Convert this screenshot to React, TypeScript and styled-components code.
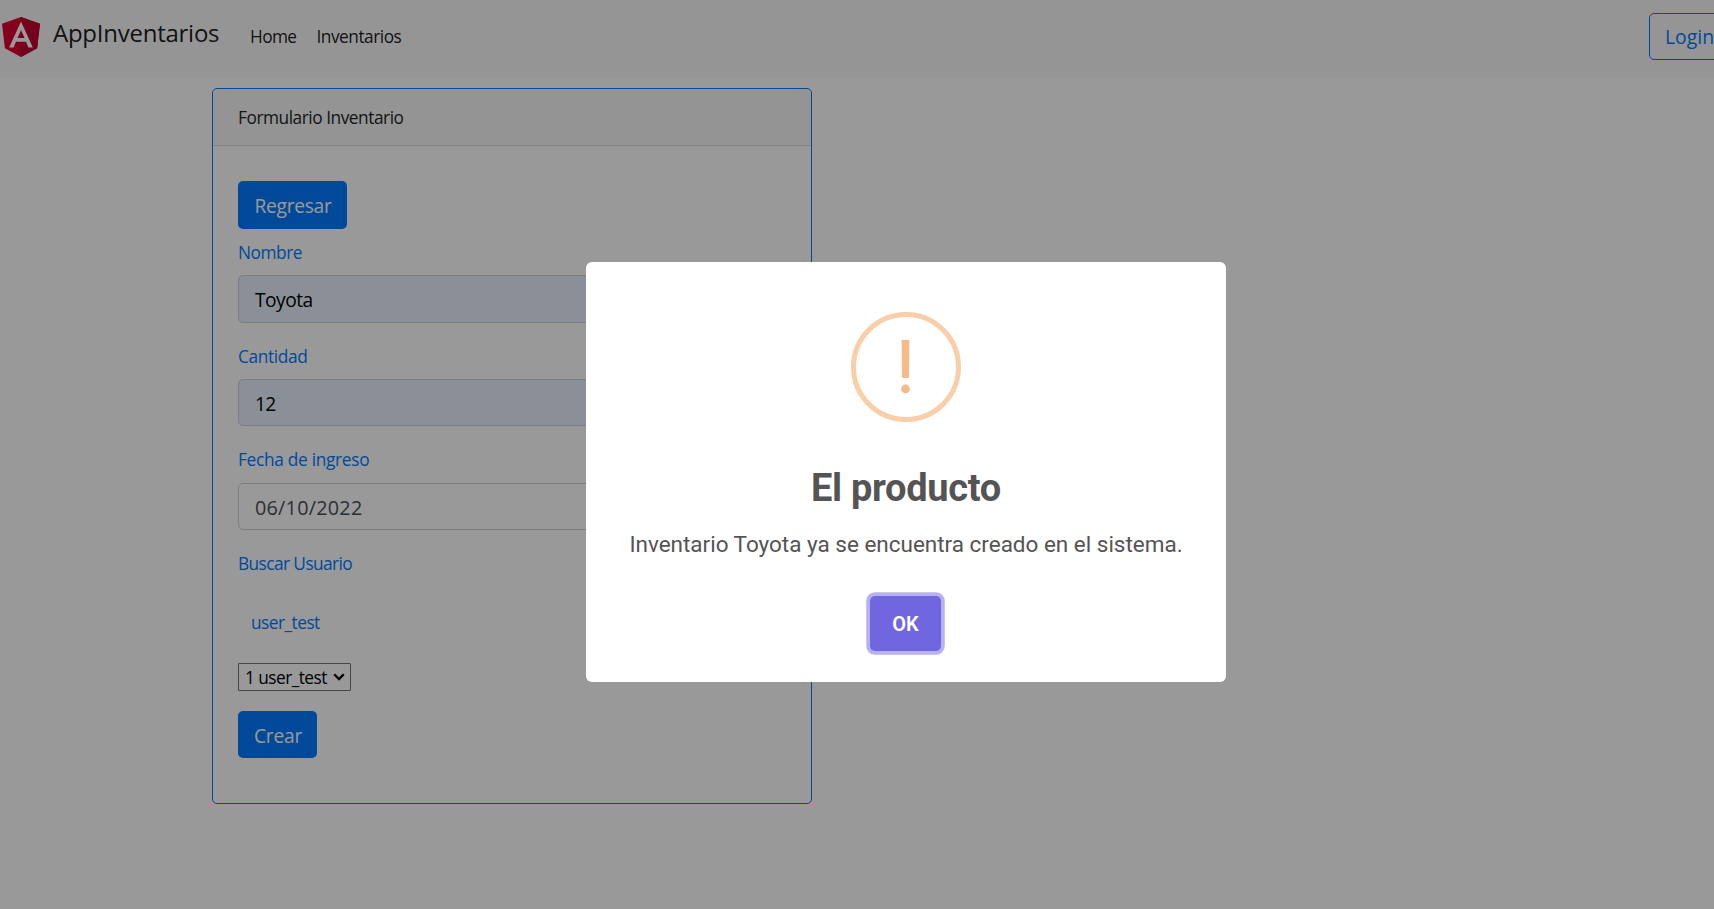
import React from "react";
import styled, { createGlobalStyle } from "styled-components";

const GlobalStyle = createGlobalStyle`
  *, *::before, *::after { box-sizing: border-box; }
  html, body, #root { height: 100%; }
  body {
    margin: 0;
    overflow: hidden;
    background: #fff;
    color: #212529;
    font-family: "Open Sans", "Noto Sans", sans-serif;
    font-size: 17.3px;
    line-height: 27px;
  }
`;

const Page = styled.div`
  height: 100vh;
  overflow: hidden;
`;

const Text = styled.span<{ $track?: number }>`
  display: inline-block;
  white-space: nowrap;
  letter-spacing: ${({ $track = 0 }) => $track}px;
`;

const Navbar = styled.nav`
  display: flex;
  align-items: flex-start;
  height: 78px;
  padding-left: 2px;
  background: #f8f9fa;
  color: rgba(0, 0, 0, 0.9);
`;

const Logo = styled.svg`
  width: 38px;
  height: 40px;
  margin-top: 17px;
  flex: none;
`;

const Brand = styled.a`
  width: 197px;
  padding: 15px 0 0 13px;
  font-size: 24px;
  line-height: 36px;
`;

const NavLinks = styled.div`
  display: flex;
  flex: 1;
  gap: 20px;
  padding: 23px 0 0 13px;
`;

const LoginButton = styled.button`
  flex: none;
  width: 80px;
  height: 47px;
  margin: 13px -15px 0 0;
  padding: 0 0 0 15px;
  border: 1px solid #007bff;
  border-radius: 5px;
  background: transparent;
  color: #007bff;
  font: 19.4px/45px "Open Sans", sans-serif;
  text-align: left;
`;

const Card = styled.section`
  width: 600px;
  height: 716px;
  margin: 10px 0 0 212px;
  border: 1px solid #007bff;
  border-radius: 5px;
  background: #fff;
`;

const CardHeader = styled.header`
  height: 57px;
  padding: 15px 25px 0;
  border-bottom: 1px solid rgba(0, 0, 0, 0.125);
  border-radius: 4px 4px 0 0;
  background: rgba(0, 0, 0, 0.03);
`;

const Form = styled.form`
  display: flex;
  flex-direction: column;
  align-items: flex-start;
  padding: 35px 25px 0;
  color: #007bff;
`;

const Button = styled.button<{ $width: number; $height: number }>`
  width: ${({ $width }) => $width}px;
  height: ${({ $height }) => $height}px;
  padding: 1px 0 0 1px;
  border: 0;
  border-radius: 5px;
  background: #007bff;
  color: #fff;
  font: 19.2px/27px "Open Sans", sans-serif;
`;

const Label = styled.label<{ $top: number }>`
  height: 27px;
  margin-top: ${({ $top }) => $top}px;
`;

const Control = styled.div<{ $height?: number; $top?: number; $filled?: boolean }>`
  display: flex;
  align-items: center;
  align-self: stretch;
  height: ${({ $height = 48 }) => $height}px;
  margin-top: ${({ $top = 9 }) => $top}px;
  padding: 1px 16px 0;
  border: 1px solid #ced4da;
  border-radius: 5px;
  background: ${({ $filled }) => ($filled ? "#e8f0fe" : "#fff")};
  color: ${({ $filled }) => ($filled ? "#000" : "#495057")};
  font-size: ${({ $filled }) => ($filled ? 19.2 : 19.8)}px;
`;

const UserMatch = styled.div`
  margin-top: 32px;
  padding-left: 13px;
`;

const Select = styled.div`
  display: flex;
  align-items: center;
  justify-content: space-between;
  width: 113px;
  height: 28px;
  margin: 27px 0 20px;
  padding: 0 5px 0 6px;
  border: 1px solid #767676;
  border-radius: 1px;
  color: #000;
`;

const Chevron = styled.svg`
  width: 12px;
  height: 8px;
  flex: none;
`;

const Backdrop = styled.div`
  position: absolute;
  inset: 0;
  display: flex;
  align-items: flex-start;
  justify-content: center;
  padding: 262px 0 0 98px;
  background: rgba(0, 0, 0, 0.4);
`;

const Modal = styled.div`
  display: flex;
  flex-direction: column;
  align-items: center;
  width: 640px;
  height: 420px;
  padding-top: 50px;
  border-radius: 6px;
  background: #fff;
  color: #545454;
  font-family: Roboto, sans-serif;
`;

const WarningIcon = styled.svg`
  width: 110px;
  height: 110px;
`;

const Title = styled.h2`
  margin: 44px 0 0;
  font-size: 38px;
  font-weight: 700;
  letter-spacing: -0.3px;
  line-height: 45px;
`;

const Message = styled.p`
  margin: 16px 0 0;
  font-size: 22.5px;
  letter-spacing: -0.01px;
  line-height: 34px;
`;

const ConfirmButton = styled.button`
  width: 71px;
  height: 55px;
  margin: 35px 1px 0 0;
  padding: 1px 0 0;
  border: 0;
  border-radius: 5px;
  background: #7066e0;
  box-shadow: 0 0 0 3.75px rgba(112, 102, 224, 0.5);
  color: #fff;
  font: 600 20px/30px Roboto, sans-serif;
`;

export default function App() {
  return (
    <>
      <GlobalStyle />
      <Page>
        <Navbar>
          <Logo viewBox="31.9 30 186.2 200" preserveAspectRatio="none">
            <path fill="#dd0031" d="M125 30 31.9 63.2l14.2 123.1L125 230l78.9-43.7 14.2-123.1z" />
            <path fill="#c3002f" d="M125 30v200l78.9-43.7 14.2-123.1z" />
            <path
              fill="#fff"
              d="M125 52.1 66.8 182.6h21.7l11.7-29.2h49.4l11.7 29.2H183zm17 83.3h-34l17-40.9z"
            />
          </Logo>
          <Brand><Text $track={-0.25}>AppInventarios</Text></Brand>
          <NavLinks>
            <Text $track={-0.6}>Home</Text>
            <Text $track={-0.48}>Inventarios</Text>
          </NavLinks>
          <LoginButton><Text>Login</Text></LoginButton>
        </Navbar>
        <Card>
          <CardHeader><Text $track={-0.46}>Formulario Inventario</Text></CardHeader>
          <Form>
            <Button type="button" $width={109} $height={48}><Text $track={-0.3}>Regresar</Text></Button>
            <Label $top={10}><Text $track={-0.45}>Nombre</Text></Label>
            <Control $filled><Text $track={-0.5}>Toyota</Text></Control>
            <Label $top={20}><Text $track={-0.36}>Cantidad</Text></Label>
            <Control $filled $height={47}><Text $track={-0.7}>12</Text></Control>
            <Label $top={20}><Text $track={-0.3}>Fecha de ingreso</Text></Label>
            <Control $height={47} $top={10}><Text $track={0.25}>06/10/2022</Text></Control>
            <Label $top={20}><Text $track={-0.58}>Buscar Usuario</Text></Label>
            <UserMatch><Text $track={-0.52}>user_test</Text></UserMatch>
            <Select>
              <Text $track={-0.55}>1 user_test</Text>
              <Chevron viewBox="0 0 12 8">
                <path d="M1.2 1.3 6 6.1l4.8-4.8" fill="none" stroke="#000" strokeWidth="2.3" />
              </Chevron>
            </Select>
            <Button type="button" $width={79} $height={47}><Text $track={-0.2}>Crear</Text></Button>
          </Form>
        </Card>
      </Page>
      <Backdrop>
        <Modal role="dialog">
          <WarningIcon viewBox="0 0 110 110">
            <circle cx="55" cy="55" r="52.5" fill="none" stroke="#facea8" strokeWidth="5" />
            <path d="M50.6 28h7.8L58 66h-7z" fill="#f8bb86" />
            <circle cx="54.5" cy="77" r="4.4" fill="#f8bb86" />
          </WarningIcon>
          <Title>El producto</Title>
          <Message>Inventario Toyota ya se encuentra creado en el sistema.</Message>
          <ConfirmButton>OK</ConfirmButton>
        </Modal>
      </Backdrop>
    </>
  );
}
